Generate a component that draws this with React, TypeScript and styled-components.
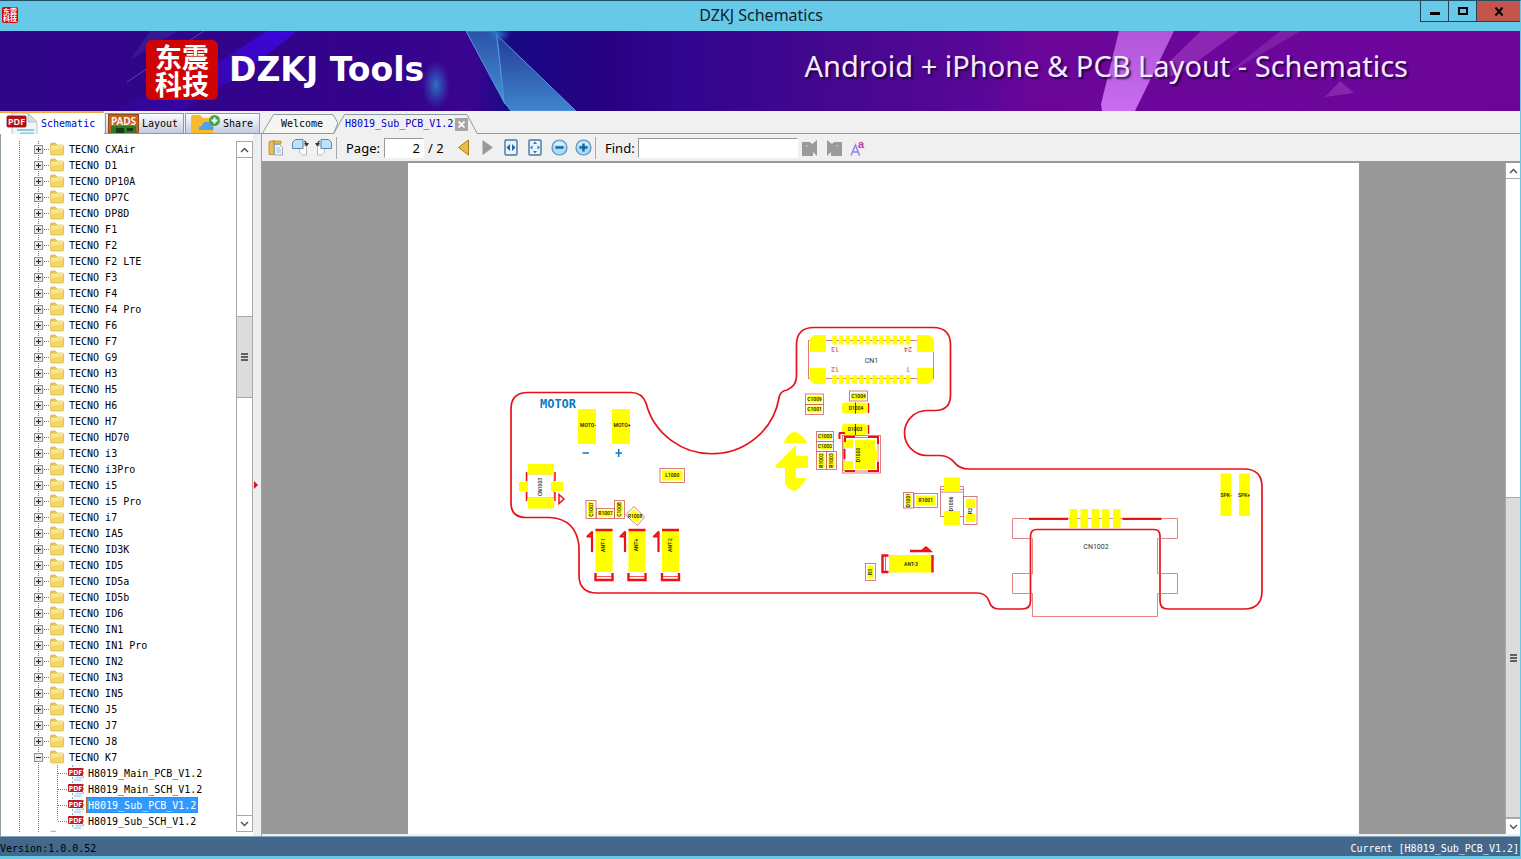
import React from "react";
import styled, { createGlobalStyle, css } from "styled-components";

const mono = `"DejaVu Sans Mono", "Liberation Mono", monospace`;
const sans = `"Noto Sans", "Open Sans", sans-serif`;

const GlobalStyle = createGlobalStyle`
  * { box-sizing: border-box; }
  body { margin: 0; background: #67c9e8; }
  button { border: 0; padding: 0; background: none; font: inherit; color: inherit; cursor: default; }
  ul { list-style: none; margin: 0; padding: 0; }
  svg { display: block; }
`;

/* ---------- window frame ---------- */

const Window = styled.div`
  display: flex;
  flex-direction: column;
  height: 100vh;
  border-top: 1px solid #1f4f66;
  border-right: 1px solid #67c9e8;
  border-bottom: 3px solid #67c9e8;
  background: #f0f0f0;
  font: 10px/16px ${mono};
  color: #000;
`;

const TitleBar = styled.header`
  display: grid;
  grid-template-columns: 100px 1fr 100px;
  flex: none;
  height: 30px;
  padding-left: 2px;
  background: #67c9e8;
`;

const AppTitle = styled.h1`
  margin: 0;
  text-align: center;
  font: 16px/28px ${sans};
  color: #10222c;
`;

const Seal = styled.div<{ $large?: boolean }>`
  display: grid;
  place-content: center;
  text-align: center;
  color: #fff;
  background: #cf0404;
  font-family: "Noto Sans CJK SC", sans-serif;
  font-weight: 700;
  ${(p) =>
    p.$large
      ? css`
          width: 72px;
          height: 60px;
          border-radius: 6px;
          font-size: 27px;
          line-height: 27px;
        `
      : css`
          width: 16px;
          height: 16px;
          margin-top: 6px;
          border-radius: 2px;
          font-size: 7px;
          line-height: 7px;
        `}
`;

const WindowButtons = styled.div`
  display: flex;
  justify-content: flex-end;
  height: 21px;
`;

const WindowButton = styled.button<{ $danger?: boolean }>`
  display: grid;
  place-items: center;
  width: ${(p) => (p.$danger ? 44 : 28)}px;
  border: 1px solid #24424f;
  border-top: 0;
  border-right: 0;
  background: ${(p) => (p.$danger ? "#c4554d" : "#67c9e8")};
`;

/* ---------- banner ---------- */

const BannerBox = styled.div`
  position: relative;
  display: flex;
  align-items: center;
  justify-content: space-between;
  flex: none;
  height: 80px;
  padding: 0 112px 2px 146px;
  overflow: hidden;
  background: #2f058a;
`;

const BannerArt = styled.svg`
  position: absolute;
  inset: 0;
  width: 100%;
  height: 100%;
`;

const Brand = styled.div`
  position: relative;
  display: flex;
  align-items: center;
  gap: 11px;
`;

const BrandName = styled.span`
  color: #fff;
  font: 700 33px/44px "DejaVu Sans", sans-serif;
`;

const Slogan = styled.span`
  position: relative;
  padding-bottom: 8px;
  color: #f6eaff;
  font: 400 29px/40px ${sans};
  text-shadow: 2px 2px 2px rgba(20, 0, 50, 0.8);
`;

/* ---------- layout ---------- */

const Main = styled.main`
  display: flex;
  flex: 1;
  min-height: 0;
`;

const Sidebar = styled.aside`
  display: flex;
  flex-direction: column;
  flex: none;
  width: 262px;
`;

const SideTabs = styled.div`
  display: flex;
  align-items: flex-end;
  gap: 1px;
  height: 23px;
  padding-right: 2px;
  border-bottom: 1px solid #8f9ba3;
`;

const SideTab = styled.button<{ $active?: boolean; $w: number }>`
  display: flex;
  align-items: center;
  gap: 3px;
  width: ${(p) => p.$w}px;
  overflow: hidden;
  ${(p) =>
    p.$active
      ? css`
          height: 23px;
          margin-bottom: -1px;
          padding-left: 6px;
          border-top: 2px solid #f3a83c;
          background: #fff;
          color: #0000c8;
        `
      : css`
          height: 20px;
          padding-left: 2px;
          border: 1px solid #8f9ba3;
          border-bottom: 0;
          background: linear-gradient(#fbfcfd, #c6cadf);
        `}
`;

const TreePanel = styled.div`
  display: flex;
  flex: 1;
  min-height: 0;
  padding: 7px 0 4px;
  border-left: 1px solid #8f9ba3;
  background: #fff;
`;

const Tree = styled.ul`
  flex: 1;
  overflow: hidden;
`;

const Row = styled.li`
  display: flex;
  align-items: center;
  height: 16px;
`;

const Expander = styled.button`
  width: 49px;
  height: 16px;
`;

const Label = styled.button<{ $selected?: boolean }>`
  height: 16px;
  margin-left: 1px;
  padding: 1px 2px 0;
  line-height: 15px;
  white-space: pre;
  ${(p) =>
    p.$selected &&
    css`
      background: #3399ff;
      color: #fff;
      outline: 1px dotted #b06018;
      outline-offset: -1px;
    `}
`;

const Splitter = styled.div`
  display: flex;
  align-items: center;
  width: 9px;
  flex: none;
  margin: -7px 0 -4px;
  border-right: 1px solid #8fa3ad;
  background: #eceff0;
`;

const ScrollBar = styled.div<{ $w: number; $bordered?: boolean }>`
  display: flex;
  flex-direction: column;
  flex: none;
  width: ${(p) => p.$w}px;
  background: #fff;
  border-left: 1px solid #a8a8a8;
  ${(p) => p.$bordered && "border-right: 1px solid #a8a8a8; border-top: 1px solid #a8a8a8; border-bottom: 1px solid #a8a8a8;"}
`;

const ScrollButton = styled.button<{ $down?: boolean }>`
  display: grid;
  place-items: center;
  height: 16px;
  flex: none;
  border: 0 solid #a8a8a8;
  ${(p) => (p.$down ? "border-top-width: 1px;" : "border-bottom-width: 1px;")}
`;

const Track = styled.div<{ $grow: number }>`
  flex: ${(p) => p.$grow} 1 0;
`;

const Thumb = styled.div<{ $grow: number }>`
  flex: ${(p) => p.$grow} 1 0;
  display: grid;
  place-items: center;
  border: solid #a8a8a8;
  border-width: 1px 0;
  background: #dcdcdc;
`;

/* ---------- document area ---------- */

const DocArea = styled.section`
  display: flex;
  flex-direction: column;
  flex: 1;
  min-width: 0;
`;

const DocTabs = styled.div`
  display: flex;
  align-items: flex-end;
  height: 23px;
  border-bottom: 1px solid #8f9ba3;
`;

const DocTab = styled.div<{ $active?: boolean }>`
  position: relative;
  display: flex;
  align-items: center;
  gap: 2px;
  height: 20px;
  margin-bottom: -1px;
  ${(p) =>
    p.$active
      ? "width: 145px; margin-left: -5px; padding-left: 12px; color: #0000c8;"
      : "width: 76px; padding-left: 19px;"}
`;

const TabShape = styled.svg`
  position: absolute;
  inset: 0;
`;

const TabLabel = styled.button`
  position: relative;
`;

const CloseTab = styled.button`
  position: relative;
  display: grid;
  place-items: center;
  width: 13px;
  height: 13px;
  background: #a5a5a5;
`;

const ToolBar = styled.div`
  display: flex;
  align-items: center;
  flex: none;
  height: 29px;
  padding: 0 2px;
  border-bottom: 2px solid #999;
  font: 13px/20px ${sans};
`;

const Tool = styled.button`
  display: grid;
  place-items: center;
  width: 24px;
  height: 24px;
`;

const Divider = styled.span`
  width: 1px;
  height: 22px;
  margin-right: 9px;
  background: #a8a8a8;
`;

const PageGroup = styled.div`
  display: flex;
  align-items: center;
  width: 105px;
`;

const FieldLabel = styled.label<{ $w: number }>`
  width: ${(p) => p.$w}px;
`;

const Field = styled.input<{ $w: number; $right?: boolean }>`
  width: ${(p) => p.$w}px;
  height: 20px;
  padding: 0 3px;
  border: 1px solid #fff;
  border-top-color: #999;
  border-left-color: #999;
  border-radius: 0;
  outline: 0;
  background: #fff;
  font: 13px/18px ${sans};
  text-align: ${(p) => (p.$right ? "right" : "left")};
`;

const PageTotal = styled.span`
  padding-left: 4px;
`;

const Viewer = styled.div`
  display: flex;
  flex: 1;
  min-height: 0;
  border-bottom: 2px solid #eef2f4;
`;

const Canvas = styled.div`
  display: flex;
  justify-content: center;
  flex: 1;
  min-width: 0;
  overflow: hidden;
  background: #999;
`;

const Sheet = styled.div`
  flex: 0 1 951px;
  background: #fff;
`;

const StatusBar = styled.footer`
  display: flex;
  justify-content: space-between;
  flex: none;
  height: 20px;
  padding: 4px 1px 0 0;
  border-top: 1px solid #8aa4ba;
  background: #43688c;
`;

const Current = styled.span`
  color: #fff;
`;

/* ---------- icons ---------- */

const FolderIcon = () => (
  <svg width="16" height="16" viewBox="1 0 16 16">
    <path d="M1.500 3 q0-1 1-1 h4 l1 2 h6 q1 0 1 1 v8 q0 1-1 1 h-11 q-1 0-1-1z" fill="#e9c452" stroke="#d9b64a" strokeWidth=".7" />
    <path d="M2 4.500 h6 l.6-.5 h5.400 v9 h-12z" fill="#fbe58c" />
    <path d="M2 9.500 L14 7 v6.500 h-12z" fill="#f5d566" />
  </svg>
);

const PdfIcon = ({ w, h }: { w: number; h: number }) => (
  <svg width={w} height={h} viewBox="0 0 32 22">
    <path d="M6 0 h16 l9 9 v13 h-25z" fill="#f1f5f8" stroke="#b9c4cc" />
    <path d="M22 0 v9 h9z" fill="#d4dde3" stroke="#aab6bf" strokeWidth=".7" />
    <path d="M11 17 h17 M14 20.500 h14" stroke="#8ec8ea" strokeWidth="2" />
    <rect x="1" y="3" width="19" height="11" rx="1" fill="#bb1016" stroke="#7f0c10" strokeWidth=".8" />
    <text x="10.500" y="12" fontSize="9" fontWeight="600" fill="#fff" textAnchor="middle" fontFamily="Noto Sans">PDF</text>
  </svg>
);

const FilePdfIcon = () => (
  <svg width="17" height="16" viewBox="0 0 17 16">
    <path d="M5 0 h10 v16 h-10z" fill="#f2f8fb" />
    <path d="M4.500 0 V16 M15.500 3 V14" stroke="#7fa5bd" strokeDasharray="2 2" />
    <path d="M8 12.500 h8 M6 15 h7" stroke="#a6d8ee" strokeWidth="1.500" />
    <rect x="0" y="3" width="15" height="8" rx="1" fill="#c01820" />
    <text x="7.500" y="9.500" fontSize="7" fontWeight="700" fill="#fff" textAnchor="middle" fontFamily="Noto Sans">PDF</text>
  </svg>
);

const PadsIcon = () => (
  <svg width="31" height="19" viewBox="0 0 31 19">
    <rect width="31" height="19" fill="#c9601c" />
    <rect x=".5" y=".5" width="30" height="18" fill="none" stroke="#8d4a1a" />
    <rect x="3" y="12" width="25" height="7" fill="#2d7a2b" />
    <path d="M8 14 h8 v5 h-8z M19 14 h6 v3 h-6z" fill="#173a18" />
    <text x="15.500" y="10.500" fontSize="10" fontWeight="600" fill="#fff" textAnchor="middle" fontFamily="Noto Sans">PADS</text>
  </svg>
);

const ShareIcon = () => (
  <svg width="32" height="19" viewBox="0 0 32 19">
    <path d="M3 3 q0-2 2-2 h7 l3 3 h8 q2 0 2 2 v13 h-22z" fill="#f7b92d" />
    <path d="M11 16 q-1-4 3-4 q1-5 6-4 q4 0 4 4 q3 1 1 4z" fill="#4ba3ea" />
    <circle cx="26.500" cy="6.500" r="5.500" fill="#43a843" />
    <path d="M26.500 3.500 v6 M23.500 6.500 h6" stroke="#fff" strokeWidth="2" />
  </svg>
);

const GuideGutter = ({ open, half }: { open?: boolean; half?: boolean }) => (
  <svg width="49" height="16" viewBox="1 0 49 16">
    <path d={half ? "M19.500 0 V16 M38.500 0 V16" : "M19.500 0 V16 M38.500 0 V16 M44 8.500 H50"} stroke="#777" strokeDasharray="1 1" />
    {!half && (
      <>
        <rect x="34.500" y="4.500" width="8" height="8" fill="#e9e9e9" stroke="#929292" />
        <path d={open ? "M36 8.500 h5" : "M36 8.500 h5 M38.500 6 v5"} stroke="#222" />
      </>
    )}
  </svg>
);

const FileGutter = ({ last }: { last?: boolean }) => (
  <svg width="67" height="16" viewBox="1 0 67 16">
    <path d={`M19.500 0 V16 M38.500 0 V16 M57.500 0 V${last ? 8 : 16} M58 8.500 H68`} stroke="#777" strokeDasharray="1 1" fill="none" />
  </svg>
);

const Chevron = ({ down }: { down?: boolean }) => (
  <svg width="9" height="6" viewBox="0 0 9 6">
    <path d={down ? "M1 1 L4.500 4.500 L8 1" : "M1 5 L4.500 1.500 L8 5"} fill="none" stroke="#555" strokeWidth="1.500" />
  </svg>
);

const Grip = () => (
  <svg width="7" height="8" viewBox="0 0 7 8">
    <path d="M0 1 h7 M0 4 h7 M0 7 h7" stroke="#606060" strokeWidth="2" />
  </svg>
);

const CopyIcon = () => (
  <svg width="16" height="16" viewBox="0 0 16 16">
    <path d="M1 1.500 l5-1 v14 l-5 0z M6 1 h7 v3 h-7z" fill="#e9bd55" stroke="#b88a2c" strokeWidth=".8" />
    <path d="M6.500 4.500 h5 l3 3 v7.500 h-8z" fill="#f4f8fc" stroke="#7d97b3" strokeWidth=".8" />
    <path d="M8 8 h4 M8 10 h5 M8 12 h5" stroke="#8dabc9" strokeWidth=".8" />
  </svg>
);

const RotateIcon = ({ left }: { left?: boolean }) => (
  <svg width="18" height="17" viewBox="0 0 18 17">
    <g transform={left ? "translate(18 0) scale(-1 1)" : undefined}>
      <path d="M10.500 6.500 h5 v9.500 h-4 l-3-3 v-4z" fill="#fbfbfb" stroke="#b4bcc3" />
      <path d="M1.500 3.500 l3-3 h7.500 v9 h-10.500z" fill="#bfe0f6" stroke="#5687ae" />
      <path d="M13 2 q2.500 0 2.500 3 M13.500 4.500 h4 l-2 2.500z" fill="#333" stroke="#333" strokeWidth=".8" />
    </g>
  </svg>
);

const ArrowIcon = ({ next }: { next?: boolean }) => (
  <svg width="13" height="17" viewBox="0 0 13 17">
    {next ? (
      <path d="M1.500 1 L12 8.500 L1.500 16z" fill="#989898" />
    ) : (
      <path d="M11.500 1 L1.500 8.500 L11.500 16z" fill="#e9bd4c" stroke="#ab7b14" />
    )}
  </svg>
);

const FitIcon = ({ page }: { page?: boolean }) => (
  <svg width="14" height="17" viewBox="0 0 14 17">
    <rect x="1" y="1" width="12" height="15" rx="1" fill="#e4f3fc" stroke="#4a76a4" strokeWidth="1.400" />
    {page ? (
      <path d="M7 2.500 l2 2.500 h-4z M7 14.500 l2-2.500 h-4z M2 8.500 l2.500-2 v4z M12 8.500 l-2.500-2 v4z" fill="#3a78b4" />
    ) : (
      <path d="M2.500 8.500 l3.500-3.500 v7z M11.500 8.500 l-3.500-3.500 v7z" fill="#1e67a8" />
    )}
  </svg>
);

const ZoomIcon = ({ plus }: { plus?: boolean }) => (
  <svg width="17" height="17" viewBox="0 0 17 17">
    <circle cx="8.500" cy="8.500" r="7.500" fill="#a8dcf8" stroke="#5a8fba" strokeWidth="1.200" />
    <path d="M3 6 a6 5 0 0 1 11 0 z" fill="#d8f0fd" />
    <path d={plus ? "M4.500 8.500 h8 M8.500 4.500 v8" : "M4.500 8.500 h8"} stroke="#14649f" strokeWidth="2.400" />
  </svg>
);

const FindIcon = ({ next }: { next?: boolean }) => (
  <svg width="16" height="16" viewBox="0 0 16 16">
    <g transform={next ? "translate(16 0) scale(-1 1)" : undefined} fill="#9a9a9a">
      <path d="M0 2 h8 l2 2 l5-4 v16 l-4-4 v4 h-11z" />
      <path d="M4 5 h1.500 v1.500 h-1.500z" fill="#d0d0d0" />
    </g>
  </svg>
);

const MatchCaseIcon = () => (
  <svg width="16" height="20" viewBox="0 0 16 20">
    <path d="M1 17.500 L5.500 7 L9.500 17.500 M2.500 14 H8.500" fill="none" stroke="#9a7df0" strokeWidth="1.500" />
    <text x="8" y="10" fontSize="11" fontWeight="700" fill="#c0399f" fontFamily="Liberation Sans">a</text>
  </svg>
);

/* ---------- board drawing ---------- */

const Board = styled.svg`
  width: 100%;
  height: auto;
  font-family: Roboto, "Liberation Sans", sans-serif;
`;

const Y = "#ffff00";
const R = "#ee1111";

type PartProps = { x: number; y: number; w: number; h: number; t: string; v?: boolean };

const Part = ({ x, y, w, h, t, v }: PartProps) => (
  <g>
    <rect x={x} y={y} width={w} height={h} fill="none" stroke="#d65a5a" strokeWidth=".8" />
    <rect x={x + 2} y={y + 2} width={w - 4} height={h - 4} fill={Y} />
    <Tag x={x + w / 2} y={y + h / 2} t={t} v={v} />
  </g>
);

const Tag = ({ x, y, t, v }: { x: number; y: number; t: string; v?: boolean }) => (
  <text transform={`translate(${x} ${y})${v ? " rotate(-90)" : ""}`} y="1.800" fontSize="5" fontWeight="500" textAnchor="middle" fill="#111">
    {t}
  </text>
);

const Antenna = ({ x, t }: { x: number; t: string }) => (
  <g>
    <rect x={x} y="530" width="17" height="42" fill={Y} />
    <path d={`M${x} 530 h17 M${x} 573 v7 h17 v-7`} fill="none" stroke={R} strokeWidth="2.400" />
    <path d={`M${x} 576.500 h17`} stroke={R} strokeWidth=".7" />
    <path d={`M${x - 3.5} 552 v-20 l-4.500 4.500 h4.500`} fill="none" stroke={R} strokeWidth="2.200" strokeLinejoin="round" />
    <Tag x={x + 8} y={545} t={t} v />
  </g>
);

const pins = Array.from({ length: 12 }, (_, i) => 832.3 + i * 6.7);

const BoardDrawing = () => (
  <Board viewBox="408 163 951 671" role="img" aria-label="H8019 sub board layout">
    <path
      d="M511 409 Q511 392.500 528 392.500 H631 Q642 392.500 646 403 A68 67 0 0 0 779 398 Q780 391 787 390 Q796.500 386 796.500 376 V345 Q796.500 327.500 814 327.500 H933 Q950.500 327.500 950.500 345 V395 Q950.500 410.500 935 410.500 H927 A22.500 22.500 0 0 0 927 455.500 H940 Q949 456 954 462 Q959 469 969 469 H1244 Q1262 469 1262 487 V591 Q1262 609 1244 609 H1168 Q1160 609 1160 601 V536 Q1160 529.500 1154 529.500 H1037 Q1030.500 529.500 1030.500 536 V601 Q1030.500 609 1022 609 H999 Q991 609 989 601 Q986 593 977 593 H597 Q579 593 579 575 V546 Q576 519 550 517.500 H526 Q511 517.500 511 503 Z"
      fill="none"
      stroke="#e8121a"
      strokeWidth="1.700"
    />
    {/* motor pads */}
    <text x="558" y="408" fontSize="12" fontWeight="700" textAnchor="middle" fill="#0b7bbd" fontFamily="DejaVu Sans Mono">MOTOR</text>
    <rect x="578" y="409" width="18" height="35" fill={Y} />
    <rect x="612" y="409" width="18" height="35" fill={Y} />
    <Tag x={588} y={425} t="MOTO-" />
    <Tag x={622} y={425} t="MOTO+" />
    <path d="M582.500 453 h6.500 M615.500 453 h6.500 M618.700 449 v8" stroke="#0b7bbd" strokeWidth="1.500" />
    <Part x={660} y={468.500} w={24.500} h={14} t="L1000" />
    {/* CN1003 */}
    <rect x="527" y="474" width="27" height="24" fill="none" stroke="#d65a5a" strokeWidth=".6" />
    <path d="M528 464 h26 v10.500 h-26z M528 498 h26 v10.500 h-26z M519 482 h9 v9 h-9z M551 482 h12 v9 h-12z" fill={Y} />
    <path d="M526.500 472 v9 M526.500 492 v9 M555 472 v9 M555 492 v9 M559 494.500 l5 4.500 l-5 4.500z" fill="none" stroke={R} strokeWidth="1.500" />
    <Tag x={540.500} y={487} t="CN1003" v />
    <Part x={586} y={500.500} w={10} h={18} t="C1007" v />
    <Part x={596.500} y={508.500} w={18} h={10} t="R1007" />
    <Part x={614.500} y={500.500} w={10} h={18} t="C1008" v />
    <path d="M634 506.500 l10.500 10.500 l-7 8.500 l-12 -10.500z" fill="none" stroke="#d65a5a" strokeWidth=".8" />
    <path d="M634 509 l8 8 l-5 6 l-9 -8z" fill={Y} />
    <Tag x={635} y={516} t="R1008" />
    <Antenna x={595.500} t="ANT-1" />
    <Antenna x={628.500} t="ANT+" />
    <Antenna x={662} t="ANT-2" />
    {/* CN1 */}
    <path d="M808.500 340.500 H933.500 V378.500 H808.500z" fill="none" stroke="#d65a5a" strokeWidth=".8" />
    <path d="M814 335 h12 v17 h-16 v-13z M917 335 h12 l5 4 v13 h-17z M810 368 h16 v16 h-12 l-4 -4z M917 368 h16 v12 l-4 4 h-12z" fill={Y} />
    {pins.map((x) => (
      <path key={x} d={`M${x} 335.500 h4.500 v9 h-4.500z M${x} 375 h4.500 v9 h-4.500z`} fill={Y} />
    ))}
    <g fontSize="7" fill="#c33" textAnchor="middle">
      <text transform="translate(835 346.500) rotate(180)">13</text>
      <text transform="translate(908 346.500) rotate(180)">24</text>
      <text transform="translate(835 366.500) rotate(180)">12</text>
      <text transform="translate(908 366.500) rotate(180)">1</text>
    </g>
    <text x="871.500" y="363" fontSize="7" textAnchor="middle" fill="#333">CN1</text>
    <Part x={805.500} y={394} w={18} h={10.500} t="C1009" />
    <Part x={805.500} y={404.500} w={18} h={10} t="C1001" />
    <Part x={849.500} y={391} w={18} h={10} t="C1004" />
    <rect x="842" y="402.500" width="25" height="11" rx="3" fill={Y} />
    <rect x="842" y="424" width="25" height="11" rx="3" fill={Y} />
    <path d="M868.500 403 v10 M868.500 425 v9" stroke={R} strokeWidth="1.500" />
    <path d="M855.500 402.500 v11 M855.500 424 v11" stroke="#922" />
    <Tag x={856} y={408} t="D1004" />
    <Tag x={855} y={429.500} t="D1003" />
    <Part x={816.500} y={431.500} w={17} h={10} t="C1003" />
    <Part x={816.500} y={441.500} w={17} h={10} t="C1002" />
    <Part x={816.500} y={451.500} w={10} h={18} t="R1002" v />
    <Part x={826.500} y={451.500} w={10} h={18} t="R1003" v />
    {/* D1000 */}
    <rect x="842.500" y="435.500" width="38" height="37.500" fill="none" stroke="#d65a5a" strokeWidth=".8" />
    <path d="M844 437.500 h34 v33.500 h-34z" fill="none" stroke="#d65a5a" strokeWidth=".8" />
    <path d="M844 440 h9 v8 h-9z M844 461 h9 v8 h-9z M855 440 h20 v9 h3 v11 h-3 v9 h-20z" fill={Y} />
    <path d="M839.500 439 v-6 M839 433 h6 M845 442 v-5 h10 M868 437 h10 v7 M878 462 v9 h-10 M855 471 h-10 M844.500 449 v10" fill="none" stroke={R} strokeWidth="2" />
    <Tag x={858} y={455} t="D1000" v />
    {/* pin-one arrow */}
    <path d="M784 443 q2-7 8-10.500 q2-1 5 0 q7 4 10 10.500z M775 466 L796 445 V456 H808 V468 H796 V478 H806.500 Q803 485 795.500 491 Q788 490 785 484 V468 H777z" fill={Y} />
    {/* middle parts */}
    <Part x={903.500} y={492.500} w={10} h={15.500} t="D1001" v />
    <Part x={914} y={493.500} w={23.500} h={14} t="R1001" />
    <path d="M940.500 486.500 h23 v30 h-23z M940.500 489.500 h23 M940.500 492 h23" fill="none" stroke="#d65a5a" strokeWidth=".8" />
    <path d="M944 477.500 h16 v14 h-16z M944 511 h16 v14 h-16z" fill={Y} />
    <Tag x={951.500} y={504} t="D1006" v />
    <rect x="963.500" y="496.500" width="13.500" height="28" fill="none" stroke="#d65a5a" strokeWidth=".8" />
    <path d="M966 499 h9 v9 h-9z M966 514 h9 v8 h-9z" fill={Y} />
    <Tag x={970} y={511} t="R2" v />
    <Part x={865.500} y={563.500} w={10} h={17} t="R3" v />
    <rect x="889" y="555" width="43" height="17.500" fill={Y} />
    <path d="M888.500 555.500 h-6 v16.500 h6 M932.500 555 v17.500 M910 551 h20 l-4 -3.500 l-4 3.500" fill="none" stroke={R} strokeWidth="2.400" />
    <path d="M885.500 556 v16" stroke={R} strokeWidth=".7" />
    <Tag x={911} y={564} t="ANT-3" />
    {/* CN1002 */}
    <path
      d="M1012.500 518.500 H1177.500 V538.500 H1157.500 V573.500 H1177.500 V593.500 H1157.500 V616.500 H1032.500 V593.500 H1012.500 V573.500 H1032.500 V538.500 H1012.500z M1030.500 573.500 h2 M1030.500 593.500 h2"
      fill="none"
      stroke="#dd6666"
      strokeWidth=".8"
    />
    <path d="M1029 518.800 h39 M1122.500 518.800 h39" stroke={R} strokeWidth="2.200" />
    {[1069.5, 1080.5, 1091.5, 1102, 1113].map((x) => (
      <rect key={x} x={x} y="509" width="7.500" height="19" fill={Y} />
    ))}
    <text x="1096" y="549" fontSize="7" textAnchor="middle" fill="#333">CN1002</text>
    {/* speaker pads */}
    <rect x="1220.500" y="473.500" width="11" height="42.500" fill={Y} />
    <rect x="1239" y="473.500" width="11" height="42.500" fill={Y} />
    <Tag x={1226} y={495} t="SPK-" />
    <Tag x={1244} y={495} t="SPK+" />
  </Board>
);

/* ---------- banner drawing ---------- */

const BannerDrawing = () => (
  <BannerArt viewBox="0 31 1520 80" preserveAspectRatio="none" aria-hidden="true">
    <defs>
      <linearGradient id="sky">
        <stop offset="0" stopColor="#2f0588" />
        <stop offset=".26" stopColor="#34038c" />
        <stop offset=".31" stopColor="#3a0590" />
        <stop offset=".335" stopColor="#160a84" />
        <stop offset=".4" stopColor="#270082" />
        <stop offset=".44" stopColor="#30058e" />
        <stop offset=".55" stopColor="#45078e" />
        <stop offset=".65" stopColor="#5a0799" />
        <stop offset=".68" stopColor="#6c0699" />
        <stop offset="1" stopColor="#6d0599" />
      </linearGradient>
      <linearGradient id="streak" x1="1" y1="0" x2="0" y2="1">
        <stop offset="0" stopColor="#3d05e0" />
        <stop offset="1" stopColor="#3708b0" stopOpacity=".3" />
      </linearGradient>
      <linearGradient id="shard" x1="0" y1="0" x2="0" y2="1">
        <stop offset="0" stopColor="#2b52a8" />
        <stop offset="1" stopColor="#4390d2" />
      </linearGradient>
      <linearGradient id="shardDark" x1="0" y1="0" x2="0" y2="1">
        <stop offset="0" stopColor="#233a98" />
        <stop offset="1" stopColor="#3f86cc" />
      </linearGradient>
      <linearGradient id="pink" x1="0" y1="0" x2="0" y2="1">
        <stop offset="0" stopColor="#b256d8" />
        <stop offset="1" stopColor="#c86cf0" />
      </linearGradient>
      <radialGradient id="glow">
        <stop offset="0" stopColor="#2d80c8" stopOpacity=".9" />
        <stop offset="1" stopColor="#2d60c8" stopOpacity="0" />
      </radialGradient>
    </defs>
    <rect y="31" width="1520" height="80" fill="url(#sky)" />
    <path d="M267 31 H297 L240 76 L180 111 H113 L217 63z" fill="url(#streak)" />
    <path d="M150 31 H178 L130 60z" fill="#3f2a9c" opacity=".5" />
    <path d="M204 31 L127 82" stroke="#5640b8" />
    <ellipse cx="436" cy="85" rx="14" ry="24" fill="url(#glow)" />
    <path d="M466 31 H496 L505 104z" fill="url(#shard)" stroke="#5b93e6" />
    <path d="M497 35 L576 111 H511 L504 102z" fill="url(#shardDark)" stroke="#5b93e6" />
    <ellipse cx="498" cy="34" rx="13" ry="9" fill="url(#glow)" />
    <path d="M1119 31 H1174 L1135 111 H1102 L1101 104z" fill="url(#pink)" />
    <path d="M1201 31 H1239 L1180 74 L1150 80z" fill="#9330b8" opacity=".8" />
    <path d="M1280 31 H1301 L1225 75z" fill="#852aac" opacity=".7" />
    <path d="M1340 81 L1354 93 L1325 97z" fill="#8527aa" />
  </BannerArt>
);

/* ---------- data ---------- */

const models =
  "CXAir|D1|DP10A|DP7C|DP8D|F1|F2|F2 LTE|F3|F4|F4 Pro|F6|F7|G9|H3|H5|H6|H7|HD70|i3|i3Pro|i5|i5 Pro|i7|IA5|ID3K|ID5|ID5a|ID5b|ID6|IN1|IN1 Pro|IN2|IN3|IN5|J5|J7|J8|K7".split("|");
const files = ["H8019_Main_PCB_V1.2", "H8019_Main_SCH_V1.2", "H8019_Sub_PCB_V1.2", "H8019_Sub_SCH_V1.2"];
const currentFile = "H8019_Sub_PCB_V1.2";

export default function App() {
  return (
    <Window>
      <GlobalStyle />
      <TitleBar>
        <Seal>
          东震
          <br />
          科技
        </Seal>
        <AppTitle>DZKJ Schematics</AppTitle>
        <WindowButtons>
          <WindowButton aria-label="Minimize">
            <svg width="10" height="10"><path d="M0 7.500 h10" stroke="#000" strokeWidth="3" /></svg>
          </WindowButton>
          <WindowButton aria-label="Maximize">
            <svg width="10" height="8"><rect x="1" y="1" width="8" height="6" fill="none" stroke="#000" strokeWidth="2" /></svg>
          </WindowButton>
          <WindowButton $danger aria-label="Close">
            <svg width="10" height="9"><path d="M1.500 .5 L8.500 8.500 M8.500 .5 L1.500 8.500" stroke="#000" strokeWidth="2" /></svg>
          </WindowButton>
        </WindowButtons>
      </TitleBar>

      <BannerBox>
        <BannerDrawing />
        <Brand>
          <Seal $large>
            东震
            <br />
            科技
          </Seal>
          <BrandName>DZKJ Tools</BrandName>
        </Brand>
        <Slogan>Android + iPhone &amp; PCB Layout - Schematics</Slogan>
      </BannerBox>

      <Main>
        <Sidebar>
          <SideTabs>
            <SideTab $active $w={104}>
              <PdfIcon w={32} h={22} />
              Schematic
            </SideTab>
            <SideTab $w={79}>
              <PadsIcon />
              Layout
            </SideTab>
            <SideTab $w={75}>
              <ShareIcon />
              Share
            </SideTab>
          </SideTabs>
          <TreePanel>
            <Tree>
              {models.map((m) => (
                <Row key={m}>
                  <Expander aria-label={`Toggle TECNO ${m}`}>
                    <GuideGutter open={m === "K7"} />
                  </Expander>
                  <FolderIcon />
                  <Label>{`TECNO ${m}`}</Label>
                </Row>
              ))}
              {files.map((f, i) => (
                <Row key={f}>
                  <FileGutter last={i === files.length - 1} />
                  <FilePdfIcon />
                  <Label $selected={f === currentFile}>{f}</Label>
                </Row>
              ))}
              <Row>
                <GuideGutter half />
                <FolderIcon />
              </Row>
            </Tree>
            <ScrollBar $w={17} $bordered>
              <ScrollButton aria-label="Scroll tree up"><Chevron /></ScrollButton>
              <Track $grow={158} />
              <Thumb $grow={81}><Grip /></Thumb>
              <Track $grow={418} />
              <ScrollButton $down aria-label="Scroll tree down"><Chevron down /></ScrollButton>
            </ScrollBar>
            <Splitter>
              <svg width="5" height="8"><path d="M1 0 L5 4 L1 8z" fill="#d8141c" /></svg>
            </Splitter>
          </TreePanel>
        </Sidebar>

        <DocArea>
          <DocTabs>
            <DocTab>
              <TabShape width="76" height="20">
                <path d="M0 20 L11.500 .5 H71 L76 9 L71.500 19.500 H0" fill="#f5f5f2" stroke="#8f9ba3" />
              </TabShape>
              <TabLabel>Welcome</TabLabel>
            </DocTab>
            <DocTab $active>
              <TabShape width="145" height="20">
                <path d="M.5 20 L11.500 .5 H134 L144.500 20" fill="#f0f0f0" stroke="#8f9ba3" />
              </TabShape>
              <TabLabel>{currentFile}</TabLabel>
              <CloseTab aria-label="Close tab">
                <svg width="7" height="7"><path d="M.5 .5 L6.500 6.500 M6.500 .5 L.5 6.500" stroke="#fff" strokeWidth="1.800" /></svg>
              </CloseTab>
            </DocTab>
          </DocTabs>
          <ToolBar>
            <Tool aria-label="Copy"><CopyIcon /></Tool>
            <Tool aria-label="Rotate right"><RotateIcon /></Tool>
            <Tool aria-label="Rotate left"><RotateIcon left /></Tool>
            <Divider />
            <PageGroup>
              <FieldLabel $w={38} htmlFor="page">Page:</FieldLabel>
              <Field id="page" $w={40} $right defaultValue="2" />
              <PageTotal>/ 2</PageTotal>
            </PageGroup>
            <Tool aria-label="Previous page"><ArrowIcon /></Tool>
            <Tool aria-label="Next page"><ArrowIcon next /></Tool>
            <Tool aria-label="Fit width"><FitIcon /></Tool>
            <Tool aria-label="Fit page"><FitIcon page /></Tool>
            <Tool aria-label="Zoom out"><ZoomIcon /></Tool>
            <Tool aria-label="Zoom in"><ZoomIcon plus /></Tool>
            <Divider />
            <FieldLabel $w={33} htmlFor="find">Find:</FieldLabel>
            <Field id="find" $w={160} />
            <Tool aria-label="Find previous"><FindIcon /></Tool>
            <Tool aria-label="Find next"><FindIcon next /></Tool>
            <Tool aria-label="Match case"><MatchCaseIcon /></Tool>
          </ToolBar>
          <Viewer>
            <Canvas>
              <Sheet>
                <BoardDrawing />
              </Sheet>
            </Canvas>
            <ScrollBar $w={15}>
              <ScrollButton aria-label="Scroll up"><Chevron /></ScrollButton>
              <Track $grow={320} />
              <Thumb $grow={321}><Grip /></Thumb>
              <ScrollButton $down aria-label="Scroll down"><Chevron down /></ScrollButton>
            </ScrollBar>
          </Viewer>
        </DocArea>
      </Main>

      <StatusBar>
        <span>Version:1.0.0.52</span>
        <Current>Current [{currentFile}]</Current>
      </StatusBar>
    </Window>
  );
}
